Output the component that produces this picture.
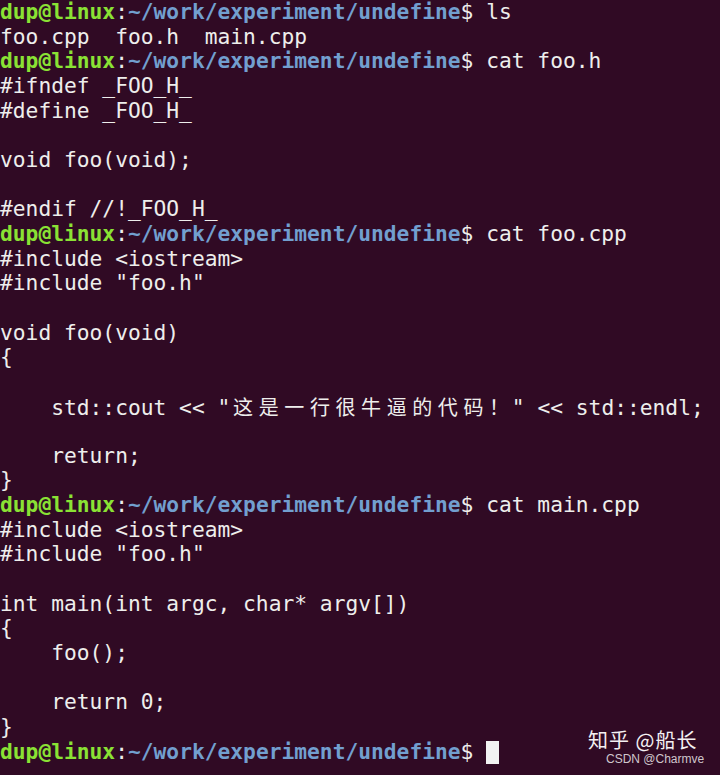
import React from "react";

const CJK = "这是一行很牛逼的代码！";

function Prompt({ cmd, cursor }: { cmd?: string; cursor?: boolean }) {
  return (
    <div className="h-[24.67px] whitespace-pre">
      <span className="font-bold text-[#8ae234]">dup@linux</span>
      <span className="text-[#eeeeec]">:</span>
      <span className="font-bold text-[#729fcf]">~/work/experiment/undefine</span>
      <span className="text-[#eeeeec]">$ </span>
      {cmd ? <span>{cmd}</span> : null}
      {cursor ? (
        <span className="inline-block w-[12.8px] h-[23px] bg-[#f2f2f2] align-[-5px]" />
      ) : null}
    </div>
  );
}

function Line({ t }: { t: string }) {
  return <div className="h-[24.67px] whitespace-pre">{t}</div>;
}

function CoutLine() {
  return (
    <div className="h-[24.67px] whitespace-pre">
      {'    std::cout << "'}
      {CJK.split("").map((c, i) => (
        <span
          key={i}
          className="inline-block w-[25.6px] text-center text-[20px] [font-family:'Noto_Sans_CJK_SC',sans-serif]"
        >
          {c}
        </span>
      ))}
      {'" << std::endl;'}
    </div>
  );
}

export default function App() {
  return (
    <div className="relative w-[720px] h-[775px] bg-[#300a24] overflow-hidden text-[#eeeeec] text-[21.26px] leading-[24.67px] [font-family:'DejaVu_Sans_Mono',monospace]">
      <Prompt cmd="ls" />
      <Line t="foo.cpp  foo.h  main.cpp" />
      <Prompt cmd="cat foo.h" />
      <Line t="#ifndef _FOO_H_" />
      <Line t="#define _FOO_H_" />
      <Line t="" />
      <Line t="void foo(void);" />
      <Line t="" />
      <Line t="#endif //!_FOO_H_" />
      <Prompt cmd="cat foo.cpp" />
      <Line t="#include <iostream>" />
      <Line t='#include "foo.h"' />
      <Line t="" />
      <Line t="void foo(void)" />
      <Line t="{" />
      <Line t="" />
      <CoutLine />
      <Line t="" />
      <Line t="    return;" />
      <Line t="}" />
      <Prompt cmd="cat main.cpp" />
      <Line t="#include <iostream>" />
      <Line t='#include "foo.h"' />
      <Line t="" />
      <Line t="int main(int argc, char* argv[])" />
      <Line t="{" />
      <Line t="    foo();" />
      <Line t="" />
      <Line t="    return 0;" />
      <Line t="}" />
      <Prompt cursor />

      <div className="absolute left-[588px] top-[729px] text-[20px] leading-[22px] tracking-[1px] text-[#f4f0f2] [font-family:'Noto_Sans_CJK_SC',sans-serif] whitespace-pre">
        知乎 @船长
      </div>
      <div className="absolute left-[606px] top-[752px] text-[12px] leading-[14px] text-[#cfc6cc] [font-family:'Liberation_Sans',Arial,sans-serif] whitespace-pre">
        CSDN @Charmve
      </div>
    </div>
  );
}
